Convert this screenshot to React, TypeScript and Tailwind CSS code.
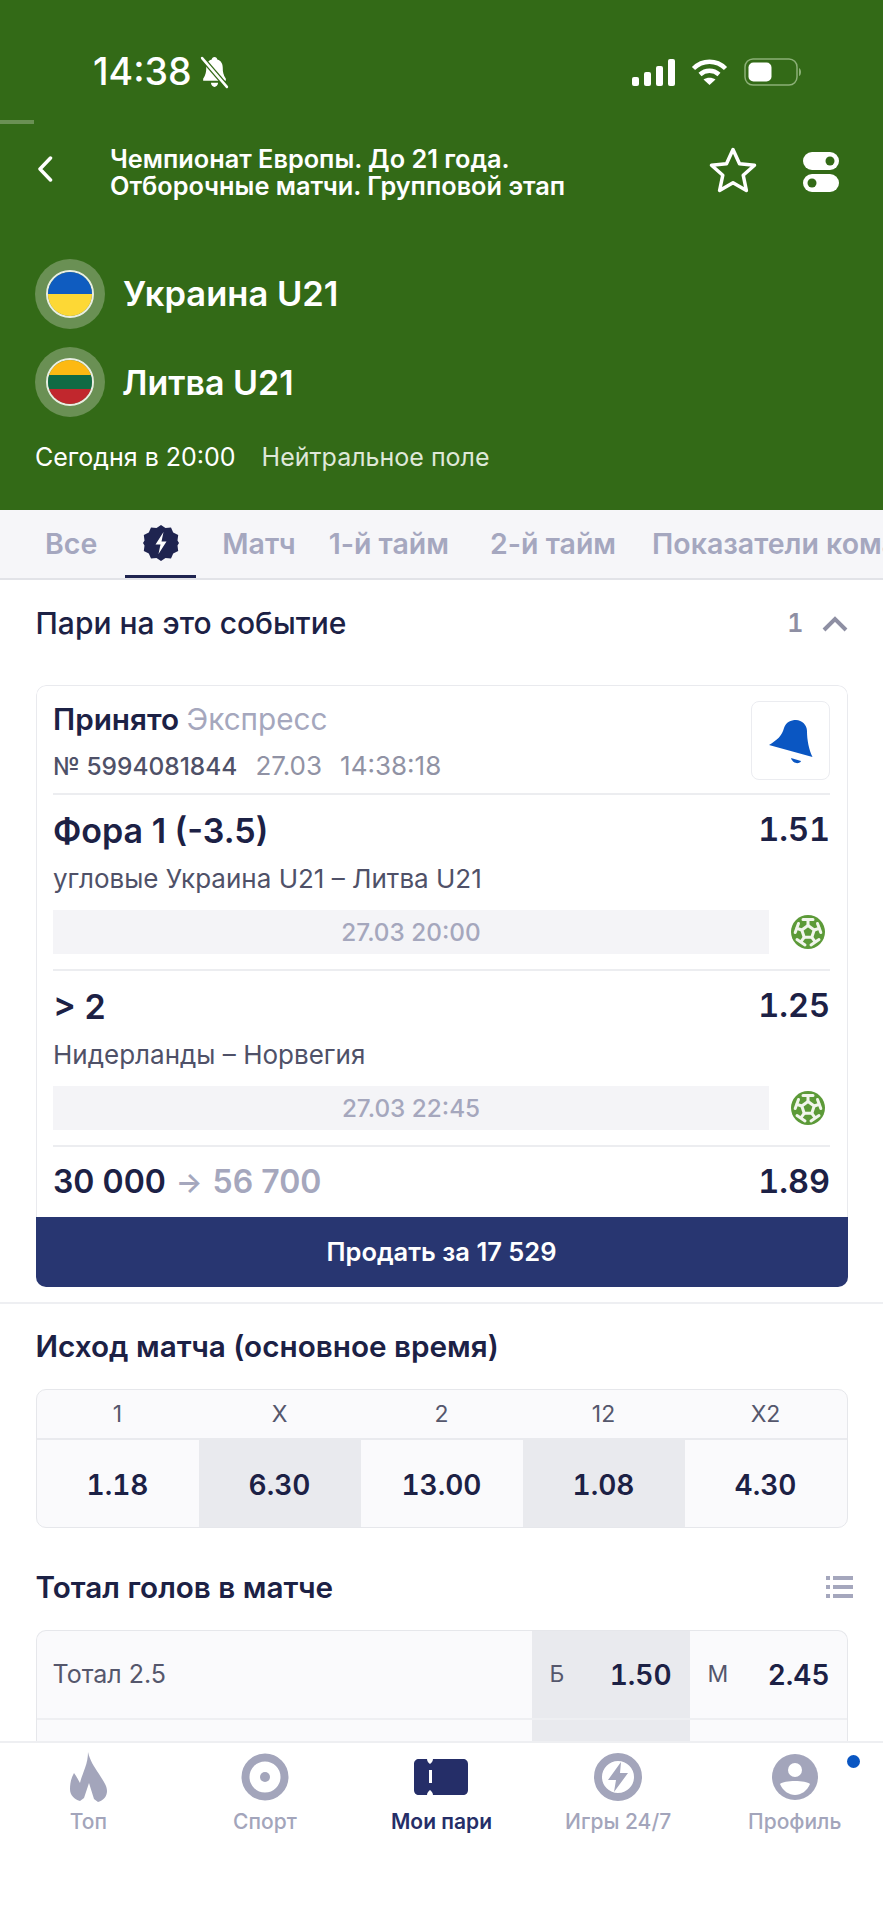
import React from "react";

const Ball = () => (
  <svg viewBox="0 0 34 34" className="w-[34px] h-[34px]">
    <circle cx="17" cy="17" r="17" fill="#5c9a38" />
    <g fill="none" stroke="#f1f5ec" strokeWidth="3" strokeLinecap="round" strokeLinejoin="round">
      <path d="M17 10.500l6.200 4.500-2.400 7.300h-7.600L10.800 15z" fill="#5c9a38" />
      <path d="M17 10.500V5M12 4.500h10" />
      <path d="M23.200 15l5.200-1.700M26.500 8.500l3.300 9" />
      <path d="M20.800 22.300l3.200 4.400M28 24.500l-8 5.500" />
      <path d="M13.200 22.300L10 26.700M6 24.500l8 5.500" />
      <path d="M10.800 15l-5.200-1.700M7.500 8.500l-3.300 9" />
    </g>
  </svg>
);

const Flag = ({ children }: { children: React.ReactNode }) => (
  <div className="w-[70px] h-[70px] rounded-full bg-[#6a9054] flex items-center justify-center shrink-0">
    <div className="w-[48px] h-[48px] rounded-full overflow-hidden border-2 border-[#e8eee2] flex flex-col">
      {children}
    </div>
  </div>
);

const BetRow = ({ pick, odd, teams, date }: { pick: string; odd: string; teams: string; date: string }) => (
  <div className="border-t-[2px] border-[#ecedf0] h-[176px] flex flex-col">
    <div className="flex justify-between items-center h-[40px] mt-[15px] text-[34px] font-semibold text-[#1c2145]">
      <span>{pick}</span>
      <span className="tabular-nums text-[32.500px]">{odd}</span>
    </div>
    <div className="mt-[14px] h-[30px] leading-[30px] text-[26px] text-[#4f5168]">{teams}</div>
    <div className="mt-[16px] flex items-center">
      <div className="w-[716px] h-[44px] bg-[#f4f4f7] flex items-center justify-center text-[24.300px] font-medium text-[#a5a7bd]">
        {date}
      </div>
      <div className="ml-[22px]">
        <Ball />
      </div>
    </div>
  </div>
);

const NavItem = ({ label, active, children }: { label: string; active?: boolean; children: React.ReactNode }) => (
  <div className="flex flex-col items-center">
    <div className="h-[50px] flex items-center justify-center">{children}</div>
    <span className={active ? "mt-[4px] text-[21px] font-semibold text-[#252e68]" : "mt-[4px] text-[21px] font-medium text-[#a3a5bb]"}>
      {label}
    </span>
  </div>
);

export default function App() {
  return (
    <div className="w-[883px] h-[1920px] bg-white overflow-hidden flex flex-col font-[Inter,sans-serif]">
      {/* Green header */}
      <header className="h-[510px] shrink-0 bg-[#336a17] text-white">
        <div className="pt-[56px] h-[88px] pl-[93px] pr-[82px] flex items-center justify-between">
          <div className="flex items-center gap-[7px]">
            <span className="text-[37.500px] font-medium leading-[32px]">14:38</span>
            <svg viewBox="0 0 30 32" className="w-[31px] h-[33px]" fill="white">
              <path d="M15 1c-1.500 0-2.500 1-2.700 2.500C8.500 4.500 7 8 7 11.500c0 4-.5 7-3 10.500v2h22v-2c-2.500-3.500-3-6.500-3-10.500 0-3.500-1.500-7-5.300-8C17.500 2 16.500 1 15 1zM11.500 26c.3 2.500 1.800 4 3.500 4s3.200-1.500 3.500-4z" />
              <path d="M3 2l24 28" stroke="#336a17" strokeWidth="5" />
              <path d="M3 2l24 28" stroke="white" strokeWidth="2.500" strokeLinecap="round" />
            </svg>
          </div>
          <div className="flex items-center gap-[16px]">
            <svg viewBox="0 0 43 27" className="w-[43px] h-[27px]" fill="white">
              <rect x="0" y="18" width="7" height="9" rx="2" />
              <rect x="12" y="13" width="7" height="14" rx="2" />
              <rect x="24" y="7" width="7" height="20" rx="2" />
              <rect x="36" y="0" width="7" height="27" rx="2" />
            </svg>
            <svg viewBox="0 0 37 27" className="w-[37px] h-[27px]" fill="none" stroke="white" strokeWidth="4.500">
              <path d="M2.500 9.500c9-9 23-9 32 0" />
              <path d="M9 15.500c5.500-5 13.500-5 19 0" />
              <path d="M18.500 26l-6-5.500c3.500-2.500 8.500-2.500 12 0z" fill="white" stroke="none" />
            </svg>
            <svg viewBox="0 0 57 28" className="w-[57px] h-[28px]">
              <rect x="1" y="1" width="52" height="26" rx="8" fill="none" stroke="#8cb077" strokeWidth="1.500" />
              <rect x="4.500" y="4.500" width="23" height="19" rx="5" fill="white" />
              <path d="M55 10c1.500.5 2 2.500 2 4s-.5 3.500-2 4z" fill="#8cb077" />
            </svg>
          </div>
        </div>

        <div className="mt-[32px] w-[34px] h-[4px] bg-[#6a9054]" />

        <div className="mt-[16px] h-[60px] flex items-center">
          <svg viewBox="0 0 16 26" className="ml-[37px] w-[16px] h-[26px] -mt-[2px]" fill="none" stroke="white" strokeWidth="3.500" strokeLinecap="round" strokeLinejoin="round">
            <path d="M13.500 2L3 13l10.500 11" />
          </svg>
          <div className="ml-[57px] flex-1 text-[25.300px] font-semibold leading-[27px] mt-[4px] whitespace-nowrap">
            Чемпионат Европы. До 21 года.
            <br />
            Отборочные матчи. Групповой этап
          </div>
          <svg viewBox="0 0 48 46" className="w-[48px] h-[46px]" fill="none" stroke="white" strokeWidth="3.500" strokeLinejoin="round">
            <path d="M24 2.500l6.500 14.200 15 1.500-11.300 10 3.200 15.300L24 35.800l-13.400 7.700 3.200-15.300L2.500 18.200l15-1.500z" />
          </svg>
          <svg viewBox="0 0 36 40" className="ml-[46px] mr-[44px] w-[36px] h-[40px] mt-[4px]">
            <rect x="0" y="0" width="36" height="18" rx="9" fill="white" />
            <circle cx="27" cy="9" r="4.500" fill="#336a17" />
            <rect x="0" y="22" width="36" height="18" rx="9" fill="white" />
            <circle cx="9" cy="31" r="4.500" fill="#336a17" />
          </svg>
        </div>

        <div className="mt-[59px] pl-[35px] flex flex-col gap-[18px]">
          <div className="flex items-center gap-[18px]">
            <Flag>
              <div className="flex-1 bg-[#0f5cc0]" />
              <div className="flex-1 bg-[#fdd835]" />
            </Flag>
            <span className="text-[34.500px] font-semibold">Украина U21</span>
          </div>
          <div className="flex items-center gap-[17px]">
            <Flag>
              <div className="flex-1 bg-[#fdb913]" />
              <div className="flex-1 bg-[#116a44]" />
              <div className="flex-1 bg-[#c1272d]" />
            </Flag>
            <span className="text-[34px] font-semibold">Литва U21</span>
          </div>
        </div>

        <div className="mt-[26px] pl-[35px] h-[30px] flex items-center text-[25px]">
          <span>Сегодня в 20:00</span>
          <span className="ml-[26px] text-[#dfe8d9]">Нейтральное поле</span>
        </div>
      </header>

      {/* Tabs */}
      <nav className="h-[70px] shrink-0 bg-[#f6f6f9] border-b-2 border-[#e2e3e8] flex items-stretch overflow-hidden text-[28.500px] font-semibold text-[#a5a7bf] whitespace-nowrap">
        <div className="ml-[45px] flex items-center">Все</div>
        <div className="ml-[28px] w-[71px] -mb-[2px] border-b-[5px] border-[#1f2450] flex items-center justify-center shrink-0">
          <svg viewBox="0 0 36 36" className="w-[36px] h-[36px]">
            <path
              d="M18 0l4.500 3 5.500-.5 2.200 5 5 2.500-.7 5.500 1.500 2.500-1.500 2.500.7 5.500-5 2.500-2.200 5-5.500-.5L18 36l-4.500-3-5.500.5-2.200-5-5-2.500.7-5.500L0 18l1.500-2.500L.8 10l5-2.500L8 2.500l5.500.5z"
              fill="#1f2450"
            />
            <path d="M20.500 7l-8 12.500h5L15.500 29l8-12.500h-5z" fill="white" />
          </svg>
        </div>
        <div className="ml-[26px] flex items-center">Матч</div>
        <div className="ml-[33px] flex items-center">1-й тайм</div>
        <div className="ml-[41px] flex items-center">2-й тайм</div>
        <div className="ml-[36px] flex items-center">Показатели команд</div>
      </nav>

      <main className="flex-1 overflow-hidden">
        {/* Bets on this event */}
        <section className="px-[35.500px] border-b-2 border-[#eeeff2] pb-[15px]">
          <div className="h-[87px] mb-[18px] flex items-center justify-between text-[#1c2145]">
            <span className="text-[30px] font-medium">Пари на это событие</span>
            <div className="flex items-center gap-[18px]">
              <span className="text-[25px] font-semibold text-[#8e8fa3] tabular-nums">1</span>
              <svg viewBox="0 0 26 16" className="w-[26px] h-[16px]" fill="none" stroke="#8e8fa3" strokeWidth="4">
                <path d="M2 14L13 3l11 11" />
              </svg>
            </div>
          </div>

          <div className="rounded-[10px] overflow-hidden">
            <div className="px-[16.500px] rounded-t-[10px] border-[1.500px] border-b-0 border-[#e9eaee]">
              <div className="h-[107px] flex justify-between pt-[15px]">
                <div>
                  <div className="text-[29.700px] font-semibold leading-[36px] text-[#1c2145]">
                    Принято <span className="font-normal text-[#a5a7bd]">Экспресс</span>
                  </div>
                  <div className="mt-[14px] text-[24.500px] leading-[30px] font-medium text-[#4f5168]">
                    № 5994081844
                    <span className="ml-[18px] font-normal text-[26px] text-[#9092a4]">27.03</span>
                    <span className="ml-[18px] font-normal text-[26px] text-[#9092a4]">14:38:18</span>
                  </div>
                </div>
                <div className="w-[79px] h-[79px] rounded-[8px] border border-[#ebecf0] flex items-center justify-center">
                  <svg viewBox="0 0 44 44" className="w-[44px] h-[44px] mt-[2px]" fill="#0a56c2">
                    <path d="M0 25C8 20 13 16 15 8 17 2 22 0 27 0 33 0 38 5 38 11 38 20 40 30 43.500 37z" />
                    <path d="M22 38l10 3C31 44 24 44.500 22 38z" />
                  </svg>
                </div>
              </div>
              <BetRow pick="Фора 1 (-3.5)" odd="1.51" teams="угловые Украина U21 – Литва U21" date="27.03 20:00" />
              <BetRow pick="> 2" odd="1.25" teams="Нидерланды – Норвегия" date="27.03 22:45" />
              <div className="border-t-[2px] border-[#ecedf0] h-[72px] flex items-center justify-between text-[32px] font-semibold text-[#1c2145]">
                <div className="flex items-center">
                  <span>30 000</span>
                  <span className="ml-[10px] text-[#a5a7bd] text-[28px]">→</span>
                  <span className="ml-[10px] text-[#a5a7bd]">56 700</span>
                </div>
                <span className="tabular-nums text-[32.500px]">1.89</span>
              </div>
            </div>
            <div className="h-[70px] bg-[#283671] text-white text-[25.500px] font-semibold flex items-center justify-center">
              Продать за 17 529
            </div>
          </div>
        </section>

        {/* Match result */}
        <section className="px-[35.500px]">
          <h2 className="mt-[26px] h-[32px] leading-[32px] text-[29.700px] font-semibold text-[#1c2145]">
            Исход матча (основное время)
          </h2>
          <div className="mt-[27px] rounded-[10px] border-[1.500px] border-[#e6e7eb] overflow-hidden bg-[#fafafc] h-[139px]">
            <div className="grid grid-cols-5 h-[50px] border-b-2 border-[#e9eaee] text-[23px] text-[#55576c] text-center leading-[48px]">
              <span>1</span>
              <span>X</span>
              <span>2</span>
              <span>12</span>
              <span>X2</span>
            </div>
            <div className="grid grid-cols-5 h-[89px] text-[28px] font-semibold tabular-nums text-[#1c2145]">
              <div className="flex items-center justify-center">1.18</div>
              <div className="flex items-center justify-center bg-[#e9eaee]">6.30</div>
              <div className="flex items-center justify-center">13.00</div>
              <div className="flex items-center justify-center bg-[#e9eaee]">1.08</div>
              <div className="flex items-center justify-center">4.30</div>
            </div>
          </div>
        </section>

        {/* Goals total */}
        <section className="px-[35.500px]">
          <div className="mt-[43px] h-[32px] flex items-center justify-between">
            <h2 className="text-[29.700px] font-semibold text-[#1c2145]">Тотал голов в матче</h2>
            <svg viewBox="0 0 27 23" className="w-[27px] h-[23px] -mr-[5px]" fill="#a5a7bd">
              <rect x="0" y="0" width="4" height="4" />
              <rect x="7" y="0" width="20" height="4" />
              <rect x="0" y="9" width="4" height="4" />
              <rect x="7" y="9" width="20" height="4" />
              <rect x="0" y="18" width="4" height="4" />
              <rect x="7" y="18" width="20" height="4" />
            </svg>
          </div>
          <div className="mt-[27px] rounded-t-[10px] border-[1.500px] border-b-0 border-[#e6e7eb] overflow-hidden bg-[#fafafc]">
            <div className="h-[89px] flex items-center border-b-2 border-[#eeeff2] text-[25px] text-[#55576c]">
              <span className="flex-1 pl-[16px]">Тотал 2.5</span>
              <div className="w-[158px] h-full bg-[#e9eaee] flex items-center justify-between px-[18px]">
                <span className="text-[23px]">Б</span>
                <span className="text-[28px] font-semibold tabular-nums text-[#1c2145]">1.50</span>
              </div>
              <div className="w-[157px] h-full flex items-center justify-between pl-[18px] pr-[17px]">
                <span className="text-[23px]">М</span>
                <span className="text-[28px] font-semibold tabular-nums text-[#1c2145]">2.45</span>
              </div>
            </div>
            <div className="h-[30px] flex">
              <div className="flex-1" />
              <div className="w-[158px] bg-[#e9eaee]" />
              <div className="w-[157px]" />
            </div>
          </div>
        </section>
      </main>

      {/* Bottom nav */}
      <footer className="relative h-[179px] shrink-0 bg-white border-t-2 border-[#eeeff2] grid grid-cols-5 pt-[9px] items-start">
        <NavItem label="Топ">
          <svg viewBox="0 0 37 50" className="w-[37px] h-[50px]" fill="#a3a5bb">
            <path d="M18 0c2 9 6 14 11 22 5 8 8 12 8 17 0 5-3 9-9 11l-4-3-5-16-5 15-4 3C4 47 0 43 0 37c0-5 1-11 4-16 2 3 4 6 6 10 1-5 3-9 5-15 2-5 3-11 3-16z" />
          </svg>
        </NavItem>
        <NavItem label="Спорт">
          <svg viewBox="0 0 48 48" className="w-[48px] h-[48px]">
            <circle cx="24" cy="24" r="19.500" fill="none" stroke="#a3a5bb" strokeWidth="8" />
            <circle cx="24" cy="24" r="5" fill="#a3a5bb" />
          </svg>
        </NavItem>
        <NavItem label="Мои пари" active>
          <svg viewBox="0 0 54 36" className="w-[54px] h-[36px]" fill="#252e68">
            <path fillRule="evenodd" d="M5 0h8c0 2 1.500 4 3 5 1.500-1 3-3 3-5h30c3 0 5 2 5 5v26c0 3-2 5-5 5H19c0-2-1.500-4-3-5-1.500 1-3 3-3 5H5c-3 0-5-2-5-5V5c0-3 2-5 5-5zM15 11v13h3V11z" />
          </svg>
        </NavItem>
        <NavItem label="Игры 24/7">
          <svg viewBox="0 0 48 48" className="w-[48px] h-[48px]">
            <circle cx="24" cy="24" r="20" fill="none" stroke="#a3a5bb" strokeWidth="8" />
            <path d="M27 9L14 27h8l-2 12 14-19h-8z" fill="#a3a5bb" />
          </svg>
        </NavItem>
        <NavItem label="Профиль">
          <svg viewBox="0 0 46 46" className="w-[46px] h-[46px]">
            <circle cx="23" cy="23" r="23" fill="#a3a5bb" />
            <circle cx="23" cy="16" r="7" fill="white" />
            <path d="M8 30c4-4 26-4 30 0-3 7-9 11-15 11s-12-4-15-11z" fill="white" />
          </svg>
        </NavItem>
        <span className="absolute left-[847px] top-[12px] w-[13px] h-[13px] rounded-full bg-[#0a56c2]" />
      </footer>
    </div>
  );
}
